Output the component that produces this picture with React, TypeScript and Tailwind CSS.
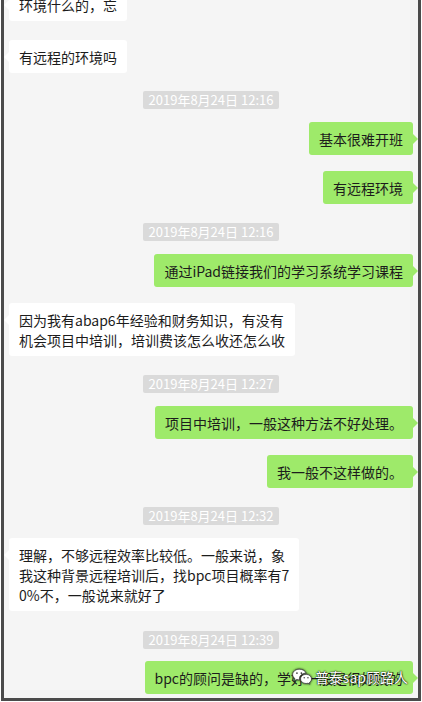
type Item =
  | { kind: 'time'; text: string; mt: string }
  | { kind: 'left' | 'right'; lines: string[]; mt: string; mark?: boolean };

const items: Item[] = [
  { kind: 'left', lines: ['环境什么的，忘'], mt: 'mt-[-12px]' },
  { kind: 'left', lines: ['有远程的环境吗'], mt: 'mt-[19px]' },
  { kind: 'time', text: '2019年8月24日 12:16', mt: 'mt-[18px]' },
  { kind: 'right', lines: ['基本很难开班'], mt: 'mt-[13px]' },
  { kind: 'right', lines: ['有远程环境'], mt: 'mt-4' },
  { kind: 'time', text: '2019年8月24日 12:16', mt: 'mt-[19px]' },
  { kind: 'right', lines: ['通过iPad链接我们的学习系统学习课程'], mt: 'mt-[13px]' },
  {
    kind: 'left',
    lines: ['因为我有abap6年经验和财务知识，有没有', '机会项目中培训，培训费该怎么收还怎么收'],
    mt: 'mt-4',
  },
  { kind: 'time', text: '2019年8月24日 12:27', mt: 'mt-[19px]' },
  { kind: 'right', lines: ['项目中培训，一般这种方法不好处理。'], mt: 'mt-[13px]' },
  { kind: 'right', lines: ['我一般不这样做的。'], mt: 'mt-4' },
  { kind: 'time', text: '2019年8月24日 12:32', mt: 'mt-[19px]' },
  {
    kind: 'left',
    lines: ['理解，不够远程效率比较低。一般来说，象', '我这种背景远程培训后，找bpc项目概率有7', '0%不，一般说来就好了'],
    mt: 'mt-[13px]',
  },
  { kind: 'time', text: '2019年8月24日 12:39', mt: 'mt-5' },
  { kind: 'right', lines: ['bpc的顾问是缺的，学好一般是很好找的'], mt: 'mt-3', mark: true },
];

const font = "font-['Microsoft_YaHei','Noto_Sans_CJK_SC',sans-serif]";

function WechatMark() {
  return (
    <div className="pointer-events-none absolute right-[5px] top-[5px] flex items-center gap-[2px]">
      <svg width="22" height="22" viewBox="0 0 24 24" className="drop-shadow-[0_0_1px_rgba(0,0,0,0.9)]">
        <path
          d="M9 3.5C4.9 3.5 1.8 6.2 1.8 9.4c0 1.8 1 3.4 2.6 4.5l-.7 2.2 2.6-1.3c.9.3 1.8.4 2.7.4h.4a5.6 5.6 0 0 1-.2-1.5c0-3.3 3.1-5.9 7-5.9h.3C15.8 5.4 12.7 3.5 9 3.5z"
          fill="#fff"
          stroke="#333"
          strokeWidth="0.8"
        />
        <path
          d="M16.5 9.1c-3.4 0-6.1 2.2-6.1 5 0 2.8 2.7 5 6.1 5 .7 0 1.4-.1 2-.3l2.1 1.1-.6-1.8c1.4-.9 2.4-2.3 2.4-4 0-2.8-2.7-5-5.9-5z"
          fill="#fff"
          stroke="#333"
          strokeWidth="0.8"
        />
        <circle cx="6.5" cy="7.8" r="0.9" fill="#333" />
        <circle cx="11.3" cy="7.8" r="0.9" fill="#333" />
        <circle cx="14.4" cy="12.8" r="0.75" fill="#333" />
        <circle cx="18.5" cy="12.8" r="0.75" fill="#333" />
      </svg>
      <span className="text-[14px] leading-[20px] text-white [text-shadow:0_0_2px_#000,0_0_1px_#000]">普泰sap顾路人</span>
    </div>
  );
}

function Bubble({ item }: { item: Extract<Item, { kind: 'left' | 'right' }> }) {
  const right = item.kind === 'right';
  return (
    <div className={`${item.mt} flex ${right ? 'justify-end' : 'justify-start'}`}>
      <div
        className={`relative rounded-[3px] px-[10px] pt-[7px] pb-[6px] text-[14px] leading-[20px] text-[#1c1c1c] whitespace-nowrap ${
          right ? 'mr-[5px] bg-[#9eea6a]' : 'ml-[5px] bg-white'
        }`}
      >
        {item.lines.map((l, i) => (
          <div key={i}>{l}</div>
        ))}
        {right ? (
          <span className="absolute right-[-5px] top-[12px] h-0 w-0 border-y-[5px] border-l-[5px] border-y-transparent border-l-[#9eea6a]" />
        ) : (
          <span className="absolute left-[-5px] top-[12px] h-0 w-0 border-y-[5px] border-r-[5px] border-y-transparent border-r-white" />
        )}
        {item.mark && <WechatMark />}
      </div>
    </div>
  );
}

export default function App() {
  return (
    <div className={`h-[702px] w-[422px] overflow-hidden bg-white ${font}`}>
      <div className="ml-[1px] h-[701px] w-[420px] overflow-hidden border-x-[3px] border-b-[3px] border-[#4b4b4b] bg-[#f5f5f5]">
        <div className="flex flex-col">
          {items.map((it, i) =>
            it.kind === 'time' ? (
              <div key={i} className={`${it.mt} flex justify-center`}>
                <span className="h-[18px] rounded-[2px] bg-[#dadada] px-[6px] text-[13px] leading-[18px] text-white">
                  {it.text}
                </span>
              </div>
            ) : (
              <Bubble key={i} item={it} />
            )
          )}
        </div>
      </div>
    </div>
  );
}
